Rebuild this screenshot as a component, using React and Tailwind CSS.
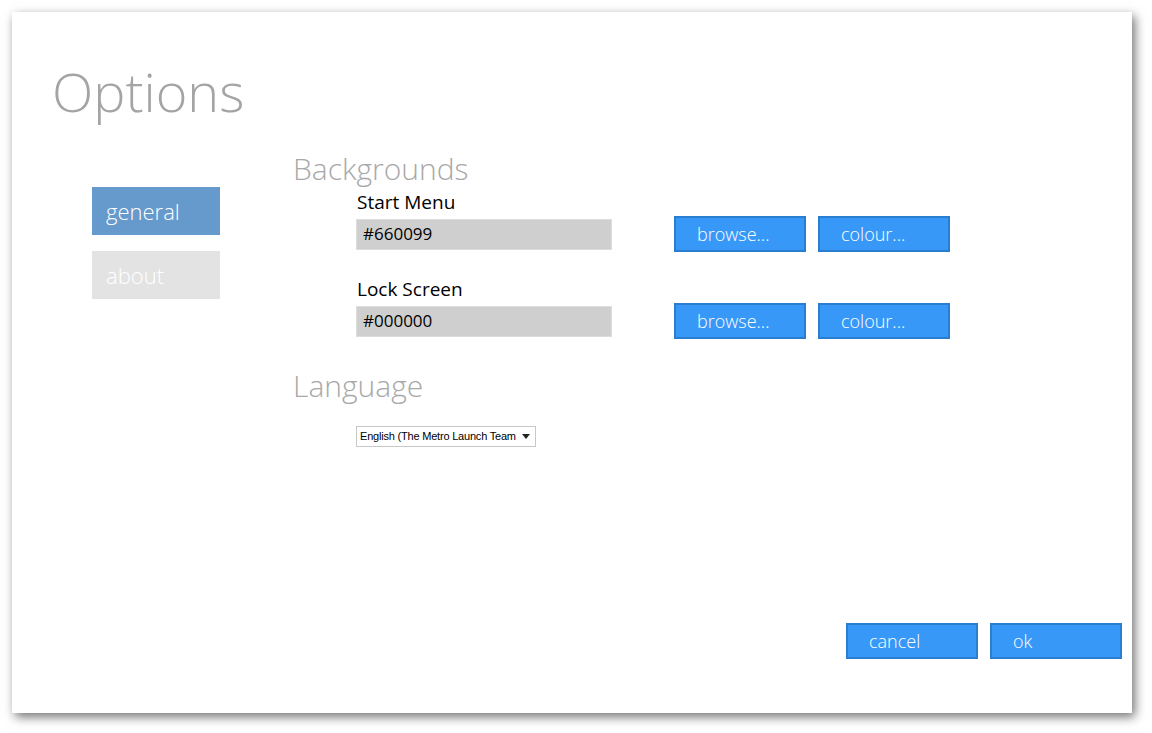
import React, { useState } from "react";

const sans = { fontFamily: '"Open Sans", "Noto Sans", sans-serif' };

const MetroButton = ({ children, className = "" }) => (
  <button
    className={`w-[132px] h-[36px] bg-[#3898f8] border-2 border-[#2a7ed0] text-white text-[18px] font-light text-left pl-[21px] leading-none ${className}`}
  >
    {children}
  </button>
);

const ColourRow = ({ label, value }) => (
  <div className="flex flex-col">
    <div className="text-[19px] text-black leading-[22px] pl-[1px]">{label}</div>
    <div className="flex items-center mt-[3px]">
      <div className="w-[256px] h-[31px] bg-[#cfcfcf] border border-[#dcdcdc] flex items-center px-[6px] text-[17px] text-black">
        {value}
      </div>
      <div className="flex gap-[12px] ml-[62px]">
        <MetroButton>browse...</MetroButton>
        <MetroButton className="pl-[20px]">colour...</MetroButton>
      </div>
    </div>
  </div>
);

export default function App() {
  const [active, setActive] = useState("general");

  return (
    <div className="w-[1152px] h-[733px] bg-white pt-[12px] pl-[12px]" style={sans}>
      {/* Window */}
      <div className="relative w-[1120px] h-[701px] bg-white shadow-[3px_4px_10px_rgba(0,0,0,0.55)] flex flex-col">
        <h1 className="text-[54px] font-light text-[#a4a4a4] leading-none pl-[40px] pt-[52px]">
          Options
        </h1>

        <div className="flex mt-[33px]">
          {/* Sidebar */}
          <div className="flex flex-col gap-[16px] pl-[80px] pt-[36px]">
            {["general", "about"].map((k) => (
              <button
                key={k}
                onClick={() => setActive(k)}
                className={`w-[128px] h-[48px] text-left pl-[14px] text-[22px] font-light text-white ${
                  active === k ? "bg-[#6699cc]" : "bg-[#e3e3e3]"
                }`}
              >
                {k}
              </button>
            ))}
          </div>

          {/* Content */}
          <div className="flex flex-col pl-[73px]">
            <h2 className="text-[30px] font-light text-[#a8a8a8] leading-[36px]">Backgrounds</h2>
            <div className="flex flex-col gap-[26px] pl-[63px] mt-[4px]">
              <ColourRow label="Start Menu" value="#660099" />
              <ColourRow label="Lock Screen" value="#000000" />
            </div>

            <h2 className="text-[30px] font-light text-[#a8a8a8] leading-[36px] mt-[29px]">Language</h2>
            <div className="pl-[63px] mt-[22px]">
              <div
                className="w-[180px] h-[21px] border border-[#c8c8c8] bg-white flex items-center justify-between pl-[3px] pr-[5px] text-[11px] text-black"
                style={{ fontFamily: '"Liberation Sans", Arial, sans-serif' }}
              >
                <span className="tracking-[-0.2px] whitespace-nowrap">English (The Metro Launch Team</span>
                <svg width="8" height="5" viewBox="0 0 8 5" className="ml-[4px] shrink-0">
                  <path d="M0 0h8L4 5z" fill="#222" />
                </svg>
              </div>
            </div>
          </div>
        </div>

        {/* Footer */}
        <div className="mt-auto flex justify-end gap-[12px] pr-[10px] pb-[54px]">
          <MetroButton>cancel</MetroButton>
          <MetroButton>ok</MetroButton>
        </div>
      </div>
    </div>
  );
}
